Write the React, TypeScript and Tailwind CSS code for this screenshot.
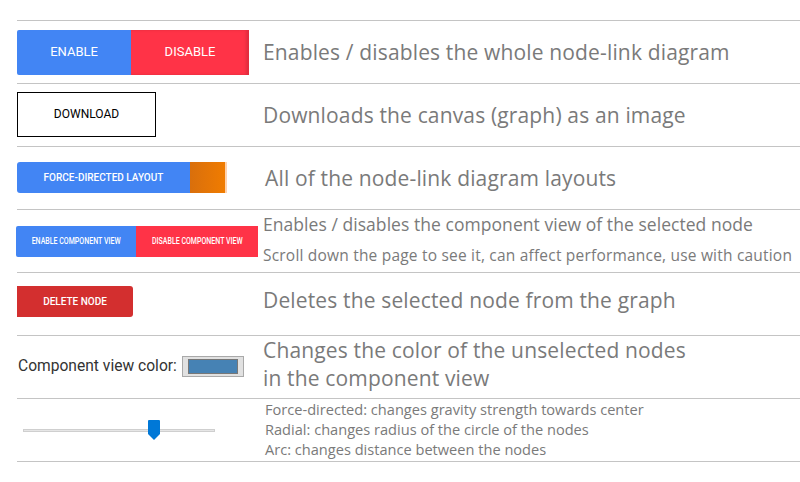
const roboto = { fontFamily: 'Roboto, "Liberation Sans", sans-serif' };

function Row({ children, desc }: { children: React.ReactNode; desc: React.ReactNode }) {
  return (
    <div className="flex h-[63px] items-center border-t border-[#c4c4c4]">
      <div className="flex w-[246px] shrink-0 items-center">{children}</div>
      <div className="min-w-0 flex-1 text-[#7a7a7a]" style={{ fontFamily: '"Open Sans", sans-serif' }}>
        {desc}
      </div>
    </div>
  );
}

function Slider() {
  return (
    <div className="relative ml-[6px] h-[20px] w-[192px]">
      <div className="absolute top-[9px] left-0 h-[3px] w-full border border-[#cfcfcf] bg-[#e6e6e6]" />
      <svg className="absolute top-0 left-[125px]" width="12" height="20" viewBox="0 0 12 20">
        <path d="M1 0 H11 A1 1 0 0 1 12 1 V14 L6 20 L0 14 V1 A1 1 0 0 1 1 0 Z" fill="#0078d7" />
      </svg>
    </div>
  );
}

export default function App() {
  return (
    <div className="min-h-[482px] bg-white pt-[20px]">
      <div className="ml-[17px] border-b border-[#c4c4c4]">
        <Row desc={<p className="text-[21px] leading-7 tracking-[0.15px]">Enables / disables the whole node-link diagram</p>}>
          <div className="flex h-[45px] text-[13px] text-white" style={roboto}>
            <button className="w-[114px] rounded-l-[2px] bg-[#4285f4] uppercase">Enable</button>
            <button className="w-[118px] bg-[#ff3347] uppercase shadow-[inset_-3px_0_3px_rgba(0,0,0,0.12)]">
              Disable
            </button>
          </div>
        </Row>

        <Row desc={<p className="-mt-px text-[21px] leading-7 tracking-[0.15px]">Downloads the canvas (graph) as an image</p>}>
          <button
            className="-mt-[2px] h-[45px] w-[139px] border border-black bg-white text-[12px] text-black uppercase"
            style={roboto}
          >
            Download
          </button>
        </Row>

        <Row desc={<p className="ml-[2px] text-[21px] leading-7 tracking-[0.15px]">All of the node-link diagram layouts</p>}>
          <div className="-mt-[2px] flex h-[31px]" style={roboto}>
            <button className="w-[173px] rounded-l-[3px] bg-[#4285f4] text-[10px] font-medium text-white uppercase">
              Force-directed layout
            </button>
            <div className="w-[37px] border-r-2 border-[#ffd2ad] bg-gradient-to-r from-[#d96f0c] to-[#f07c00]" />
          </div>
        </Row>

        <Row
          desc={
            <div className="-mt-[3px]">
              <p className="text-[17.5px] leading-[31px] tracking-[0.05px]">
                Enables / disables the component view of the selected node
              </p>
              <p className="text-[15.5px] leading-[31px] tracking-[0.2px]">
                Scroll down the page to see it, can affect performance, use with caution
              </p>
            </div>
          }
        >
          <div className="-ml-px flex h-[31px] text-[9.5px] font-medium text-white" style={roboto}>
            <button className="w-[120px] rounded-l-[2px] bg-[#4285f4] uppercase">
              <span className="inline-block scale-x-[0.74] whitespace-nowrap">Enable component view</span>
            </button>
            <button className="w-[122px] bg-[#ff3347] uppercase">
              <span className="inline-block scale-x-[0.74] whitespace-nowrap">Disable component view</span>
            </button>
          </div>
        </Row>

        <Row desc={<p className="-mt-[8px] text-[21px] leading-7 tracking-[0.15px]">Deletes the selected node from the graph</p>}>
          <button
            className="-mt-[5px] h-[31px] w-[116px] rounded-r-[3px] bg-[#d32f2f] text-[10px] font-medium text-white uppercase"
            style={roboto}
          >
            Delete node
          </button>
        </Row>

        <Row
          desc={
            <p className="-mt-[6px] text-[21px] leading-[28px] tracking-[0.15px]">
              Changes the color of the unselected nodes
              <br />
              in the component view
            </p>
          }
        >
          <label className="ml-px flex items-center gap-[5px] text-[15.6px] text-[#333]" style={roboto}>
            Component view color:
            <span className="flex h-[21px] w-[62px] items-center justify-center border border-[#a9a9a9] bg-[#e1e1e1]">
              <span className="h-[15px] w-[50px] border border-[#777] bg-[#4682b4]" />
            </span>
          </label>
        </Row>

        <Row
          desc={
            <div className="-mt-[2px] ml-[2px] text-[14.6px] leading-[20px]">
              <p>Force-directed: changes gravity strength towards center</p>
              <p>Radial: changes radius of the circle of the nodes</p>
              <p>Arc: changes distance between the nodes</p>
            </div>
          }
        >
          <Slider />
        </Row>
      </div>
    </div>
  );
}
